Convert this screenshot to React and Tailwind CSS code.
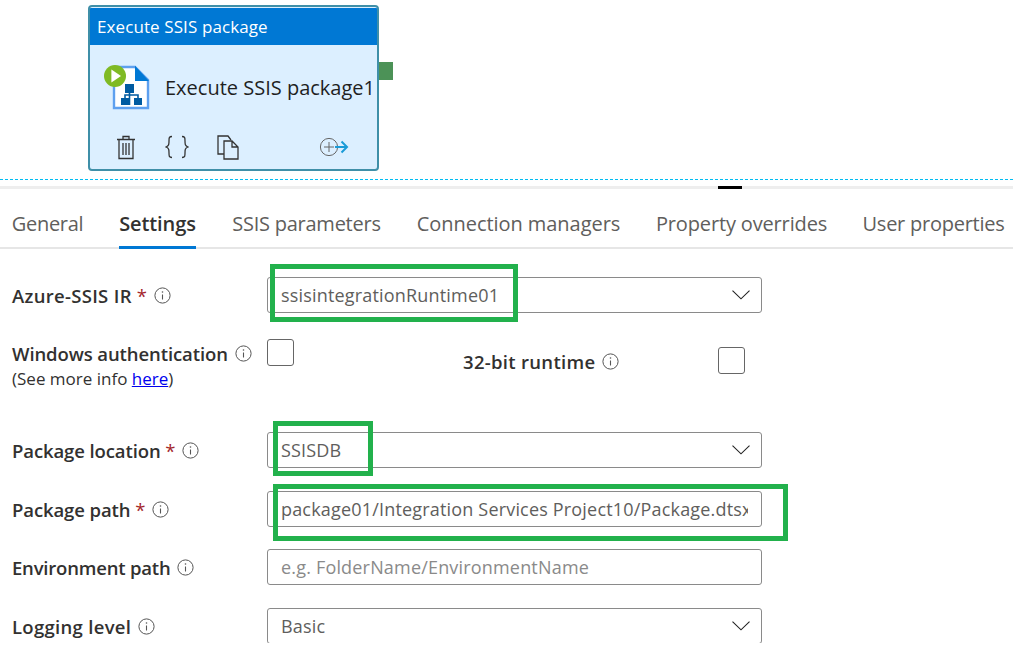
const font = { fontFamily: '"Open Sans", "Noto Sans", sans-serif' };

function Info() {
  return (
    <svg width="17" height="17" viewBox="0 0 17 17" fill="none" className="shrink-0">
      <circle cx="8.5" cy="8.5" r="7.6" stroke="#555" strokeWidth="1" />
      <path d="M8.5 7.5v5" stroke="#555" strokeWidth="1.1" />
      <circle cx="8.5" cy="5" r="0.8" fill="#555" />
    </svg>
  );
}

function Chevron() {
  return (
    <svg width="18" height="10" viewBox="0 0 18 10" fill="none" className="shrink-0">
      <path d="M0.5 0.7 9 8.8l8.5-8.1" stroke="#222" strokeWidth="1.1" />
    </svg>
  );
}

function Field({ value, placeholder, select }) {
  return (
    <div className={`flex h-9 w-[495px] items-center rounded-[3px] border border-[#8a8a8a] bg-white pl-[13px] ${select ? "pr-[11px]" : "pr-[13px]"}`}>
      <span className={`flex-1 overflow-hidden whitespace-nowrap pt-px text-[18px] tracking-[0.18px] ${placeholder ? "text-[#8a8a8a]" : "text-[#605e5c]"}`}>
        {value || placeholder}
      </span>
      {select && <Chevron />}
    </div>
  );
}

function Label({ text, required, wide, narrow }) {
  const tracking = wide ? "tracking-[0.3px]" : narrow ? "tracking-[-0.2px]" : "tracking-[-0.1px]";
  return (
    <div className={`flex items-center gap-[7px] text-[18.5px] font-semibold text-[#323130] ${tracking}`}>
      <span className="pt-px">
        {text}
        {required && <span className="font-normal text-[#a4262c]"> *</span>}
      </span>
      <Info />
    </div>
  );
}

function PipelineFileIcon() {
  return (
    <svg width="46" height="46" viewBox="0 0 46 46" fill="none">
      <path d="M10 2h21l13 13v28H10z" fill="#fff" stroke="#5ea0ef" strokeWidth="2.4" />
      <path d="M31 0.8 45 16H31z" fill="#0078d4" />
      <path d="M21 19h9v9h-9zM17 33h8v7h-8zM30 33h8v7h-8z" fill="#005ba1" />
      <path d="M25.5 28v12M21 33v-3h13v3" stroke="#005ba1" strokeWidth="1.6" />
      <circle cx="11" cy="11" r="11" fill="#7fba24" />
      <path d="M7.4 4.6 17 11l-9.600 6.400z" fill="#fff" />
    </svg>
  );
}

function CardActions() {
  return (
    <div className="flex h-[33px] items-center pl-[26px] pt-[3px]">
      <svg width="20" height="25" viewBox="0 0 20 25" fill="none" stroke="#333" strokeWidth="1.3">
        <path d="M1 4.5h18M7 4.5V1.5h6v3M3 4.5v19h14v-19M7 8v12M10 8v12M13 8v12" />
      </svg>
      <svg width="24" height="24" viewBox="0 0 24 24" fill="none" stroke="#333" strokeWidth="1.3" className="ml-[29px]">
        <path d="M7 1.5C4 1.5 4 3 4 6s0 5-3 6c3 1 3 3 3 6s0 4.500 3 4.500M17 1.500c3 0 3 1.500 3 4.500s0 5 3 6c-3 1-3 3-3 6s0 4.500-3 4.500" />
      </svg>
      <svg width="22" height="25" viewBox="0 0 22 25" fill="none" stroke="#333" strokeWidth="1.3" className="ml-[28px]">
        <path d="M7 19H1V1h10l3 4" />
        <path d="M7 6h8l6 6v12H7zM15 6v6h6" fill="#dcefff" />
      </svg>
      <svg width="30" height="20" viewBox="0 0 30 20" fill="none" className="ml-[80px]">
        <circle cx="10" cy="10" r="8.600" stroke="#666" strokeWidth="1" />
        <path d="M10 5v10M5 10h10" stroke="#666" strokeWidth="1" />
        <path d="M16 10h12M22.500 4.500 28 10l-5.500 5.500" stroke="#1a9bd7" strokeWidth="2" />
      </svg>
    </div>
  );
}

function ActivityCard() {
  return (
    <div className="ml-[88px] flex items-start pt-[5px]">
      <div className="h-[166px] w-[291px] overflow-hidden rounded-[4px] border-2 border-[#3f8fa8] bg-[#dcefff]">
        <div className="mt-px flex h-[37px] items-center bg-[#0078d4] pl-[7px] pt-px text-[17px] tracking-[0.1px] text-white">
          Execute SSIS package
        </div>
        <div className="flex h-[84px] items-center pl-[14px] pt-[2px]">
          <PipelineFileIcon />
          <span className="ml-[15px] whitespace-nowrap text-[20px] text-[#1f1f1f]">
            Execute SSIS package1
          </span>
        </div>
        <CardActions />
      </div>
      <div className="mt-[57px] h-[18px] w-[14px] bg-[#4c9257]" />
    </div>
  );
}

function Tabs() {
  const tabs = [
    ["General", "w-[71px] tracking-[-0.3px]"],
    ["Settings", "w-[77px] tracking-[-0.1px]"],
    ["SSIS parameters", "w-[149px] tracking-[-0.25px]"],
    ["Connection managers", "w-[203px] tracking-[-0.05px]"],
    ["Property overrides", "w-[171px] tracking-[-0.15px]"],
    ["User properties", "w-[141px] tracking-[-0.25px]"],
  ];
  return (
    <div className="flex h-[60px] gap-9 border-b-2 border-[#e6e6e6] pl-3">
      {tabs.map(([name, width]) => (
        <div
          key={name}
          className={`${width} -mb-[2px] flex shrink-0 items-center justify-center whitespace-nowrap border-b-[3px] pt-[13px] text-[20px] ${
            name === "Settings"
              ? "border-[#0078d4] font-semibold text-[#323130]"
              : "border-transparent text-[#605e5c]"
          }`}
        >
          {name}
        </div>
      ))}
    </div>
  );
}

export default function App() {
  return (
    <div className="relative h-[658px] w-[1013px] overflow-hidden bg-white" style={font}>
      <ActivityCard />
      <div className="mt-[8px] border-t border-dashed border-[#00bcf2]" />
      <div className="mt-[6px] h-[3px] bg-[#eeeeee] pl-[718px]">
        <div className="h-[3px] w-6 bg-black" />
      </div>
      <Tabs />

      <div className="h-[394px] overflow-hidden pl-3">
        <div className="mt-[28px] flex items-center">
          <div className="w-[255px]"><Label text="Azure-SSIS IR" required wide /></div>
          <Field value="ssisintegrationRuntime01" select />
        </div>

        <div className="mt-[26px] flex h-[80px] items-start">
          <div className="w-[255px]">
            <Label text="Windows authentication" />
            <div className="-mt-[2px] text-[17px] text-[#323130]">
              (See more info <span className="text-[#0000ee] underline">here</span>)
            </div>
          </div>
          <div className="size-[27px] rounded-[3px] border border-[#666]" />
          <div className="ml-[169px] mt-2 w-[255px]"><Label text="32-bit runtime" wide /></div>
          <div className="mt-2 size-[27px] rounded-[3px] border border-[#666]" />
        </div>

        <div className="mt-[13px] flex items-center">
          <div className="w-[255px]"><Label text="Package location" required /></div>
          <Field value="SSISDB" select />
        </div>
        <div className="mt-[23px] flex items-center">
          <div className="w-[255px]"><Label text="Package path" required /></div>
          <Field value="package01/Integration Services Project10/Package.dtsx" />
        </div>
        <div className="mt-[22px] flex items-center">
          <div className="w-[255px]"><Label text="Environment path" narrow /></div>
          <Field placeholder="e.g. FolderName/EnvironmentName" />
        </div>
        <div className="mt-[23px] flex items-center">
          <div className="w-[255px]"><Label text="Logging level" wide /></div>
          <Field value="Basic" select />
        </div>
      </div>

      {/* green highlight boxes drawn over the form */}
      <div className="absolute left-[270px] top-[264px] h-[58px] w-[248px] border-[5px] border-[#22b14c]" />
      <div className="absolute left-[273px] top-[421px] h-[55px] w-[100px] border-[5px] border-[#22b14c]" />
      <div className="absolute left-[273px] top-[484px] h-[57px] w-[515px] border-[5px] border-[#22b14c]" />
    </div>
  );
}
